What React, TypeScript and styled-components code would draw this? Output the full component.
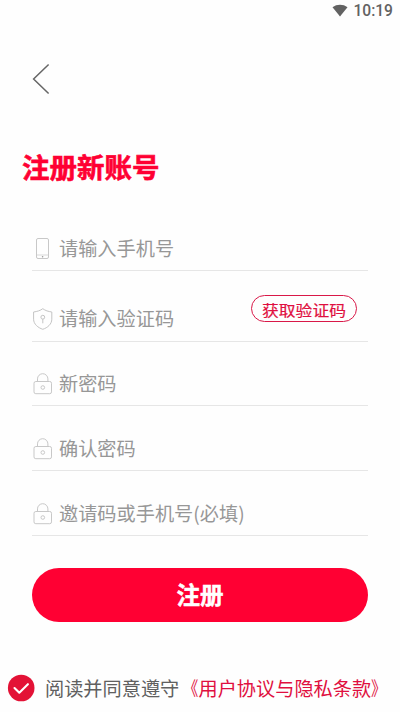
import React from "react";
import styled, { createGlobalStyle } from "styled-components";

const GlobalStyle = createGlobalStyle`
  * { box-sizing: border-box; }
  body {
    margin: 0;
    background: #fefefe;
    font-family: "Noto Sans CJK SC", sans-serif;
  }
  svg { display: block; flex: none; }
`;

const Screen = styled.main`
  display: flex;
  flex-direction: column;
  height: 712px;
  width: 400px;
  overflow: hidden;
`;

const StatusBar = styled.header`
  display: flex;
  align-items: center;
  justify-content: flex-end;
  gap: 5px;
  height: 22px;
  padding-right: 7px;
  color: #626262;
  font: 500 15.6px/22px Roboto, sans-serif;
`;

const BackButton = styled.button`
  width: 20px;
  height: 32px;
  margin: 41px 0 0 31px;
  padding: 0;
  border: 0;
  background: none;
`;

const Title = styled.h1`
  margin: 51px 0 0 22px;
  height: 40px;
  font-size: 27.5px;
  line-height: 40px;
  font-weight: 700;
  color: #ff0033;
  -webkit-text-stroke: 0.6px #ff0033;
`;

const Form = styled.form`
  display: flex;
  flex-direction: column;
  margin: 30px 32px 0;
`;

const Field = styled.label<{ $height: number; $bottom?: number }>`
  display: flex;
  align-items: flex-end;
  height: ${(p) => p.$height}px;
  padding-bottom: ${(p) => p.$bottom ?? 8}px;
  border-bottom: 1px solid #e6e6e6;
`;

const FieldIcon = styled.span`
  display: flex;
  justify-content: center;
  width: 22px;
  margin: 0 5px 2px 0;
`;

const Input = styled.input`
  flex: 1;
  min-width: 0;
  height: 28px;
  padding: 0;
  border: 0;
  outline: 0;
  background: transparent;
  font: 400 19.2px/28px "Noto Sans CJK SC", sans-serif;
  &::placeholder { color: #979797; opacity: 1; }
`;

const CodeButton = styled.button`
  width: 106px;
  height: 27px;
  margin: 0 11px 10px 0;
  padding: 3px 0 0;
  border: 1px solid #d91848;
  border-radius: 14px;
  background: none;
  color: #e00f40;
  font: 400 16.8px/22px "Noto Sans CJK SC", sans-serif;
  white-space: nowrap;
`;

const CodeLabel = styled.span`
  display: block;
  transform: scaleY(0.9);
  -webkit-text-stroke: 0.2px #e00f40;
`;

const SubmitButton = styled.button`
  height: 54px;
  margin-top: 32px;
  padding: 0 0 2px;
  border: 0;
  border-radius: 27px;
  background: #ff0033;
  color: #fff;
  font: 700 23.5px/52px "Noto Sans CJK SC", sans-serif;
  -webkit-text-stroke: 0.5px #fff;
`;

const Agreement = styled.div`
  display: flex;
  align-items: center;
  gap: 10px;
  height: 30px;
  margin: 51px 0 0 7px;
  color: #606060;
  font-size: 19.2px;
  line-height: 30px;
  white-space: nowrap;
`;

const PolicyLink = styled.span`
  color: #e00f40;
`;

/* Pulls a book-title mark in towards the text it encloses. */
const Mark = styled.span<{ $closing?: boolean }>`
  display: inline-block;
  transform: translateX(${(p) => (p.$closing ? -2 : 2)}px) scaleX(0.8);
`;

const WifiIcon = () => (
  <svg width="16" height="14" viewBox="0 0 16 14">
    <path d="M.5 3.3C4.8 0 11.2 0 15.5 3.3L8 12.6Z" fill="#626262" />
  </svg>
);

const BackIcon = () => (
  <svg width="20" height="32" viewBox="0 0 20 32" fill="none" stroke="#666" strokeWidth="1.5">
    <path d="M17.6 1.5 2.6 16l15 14.5" />
  </svg>
);

const PhoneIcon = () => (
  <svg width="22" height="22" viewBox="0 0 22 22" fill="none" stroke="#c8c8c8">
    <rect x="4.5" y=".5" width="12" height="20" rx="1.5" />
    <path d="M5 17h12" strokeWidth=".7" />
    <circle cx="10.6" cy="18.8" r=".8" fill="#999" stroke="none" />
  </svg>
);

const ShieldIcon = () => (
  <svg width="22" height="22" viewBox="0 0 22 22" fill="none" stroke="#c4c4c4">
    <path d="M10.8.7C8.3 2.6 5.2 3.5 1.6 4v7.2c0 5 4.5 8.5 9.2 10.1 4.7-1.6 9-5.1 9-10.1V4C16.3 3.5 13.3 2.6 10.8.7Z" />
    <circle cx="10.8" cy="9.2" r="1.9" />
    <path d="M10.8 11.1v4.2" />
  </svg>
);

const LockIcon = () => (
  <svg width="22" height="22" viewBox="0 0 22 22" fill="none" stroke="#c8c8c8">
    <rect x="2" y="8.5" width="17.5" height="12.2" rx="1.8" />
    <path d="M5.5 8.5V5.9a5.2 5.2 0 0 1 10.4 0v2.6" />
    <circle cx="10.8" cy="14.5" r="1.8" />
  </svg>
);

const CheckIcon = () => (
  <svg width="28" height="28" viewBox="0 0 28 28" fill="none">
    <circle cx="14.2" cy="14" r="13.3" fill="#e31236" />
    <path d="m7.5 14 4.8 4.7 8.6-8.5" stroke="#fff" strokeWidth="2.1" strokeLinecap="round" strokeLinejoin="round" />
  </svg>
);

export default function App() {
  return (
    <Screen>
      <GlobalStyle />
      <StatusBar>
        <WifiIcon />
        <span>10:19</span>
      </StatusBar>
      <BackButton aria-label="返回"><BackIcon /></BackButton>
      <Title>注册新账号</Title>
      <Form>
        <Field $height={55}>
          <FieldIcon><PhoneIcon /></FieldIcon>
          <Input placeholder="请输入手机号" />
        </Field>
        <Field $height={71} $bottom={9}>
          <FieldIcon><ShieldIcon /></FieldIcon>
          <Input placeholder="请输入验证码" />
          <CodeButton type="button"><CodeLabel>获取验证码</CodeLabel></CodeButton>
        </Field>
        <Field $height={64}>
          <FieldIcon><LockIcon /></FieldIcon>
          <Input placeholder="新密码" />
        </Field>
        <Field $height={65}>
          <FieldIcon><LockIcon /></FieldIcon>
          <Input placeholder="确认密码" />
        </Field>
        <Field $height={65}>
          <FieldIcon><LockIcon /></FieldIcon>
          <Input placeholder="邀请码或手机号(必填)" />
        </Field>
        <SubmitButton type="button">注册</SubmitButton>
      </Form>
      <Agreement>
        <CheckIcon />
        <span>
          阅读并同意遵守
          <PolicyLink><Mark>《</Mark>用户协议与隐私条款<Mark $closing>》</Mark></PolicyLink>
        </span>
      </Agreement>
    </Screen>
  );
}
